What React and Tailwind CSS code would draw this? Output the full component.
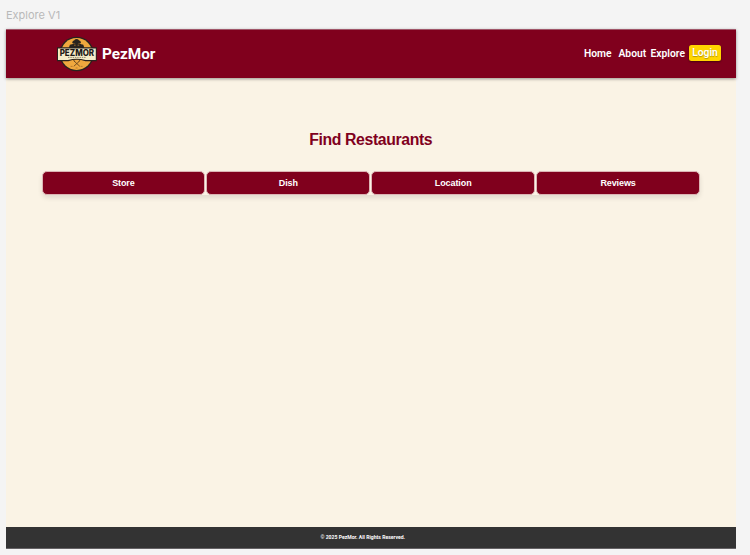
const filters = ["Store", "Dish", "Location", "Reviews"];

function Logo() {
  return (
    <svg width="40" height="36" viewBox="0 0 40 36" className="block shrink-0" aria-label="PezMor">
      <circle cx="19.6" cy="18" r="17.3" fill="#29231f" />
      <circle cx="19.6" cy="18" r="15.9" fill="#f0a83e" />
      <g fill="#29231f">
        <circle cx="19.6" cy="5.6" r="2.6" />
        <circle cx="17" cy="6.2" r="1.6" />
        <circle cx="22.2" cy="6.2" r="1.6" />
        <path d="M15.2 12V8h8.8v4z" />
        <circle cx="14.6" cy="10.6" r="2.3" />
        <circle cx="24.6" cy="10.6" r="2.3" />
        <path d="M11.5 13h16.2l-1-2H12.5z" />
      </g>
      <path d="M17 9.2h1.7M20.6 9.2h1.7" stroke="#b87f31" strokeWidth="0.8" />
      <path d="M0 11.3h39.8v13.9H28.4Q19.6 22.4 11.4 25.2H0z" fill="#29231f" />
      <path d="M1 12.5h37.8v11.6H28.6Q19.6 21.2 11 24.1H1z" fill="#f6ecc9" />
      <text x="19.9" y="20" textAnchor="middle" textLength="34.5" lengthAdjust="spacingAndGlyphs" fontSize="8.4" fontWeight="800" fill="#1e1a18" className="font-['Inter',sans-serif]">PEZMOR</text>
      <path d="M11 21.4h18" stroke="#665d4c" strokeWidth="0.7" strokeDasharray="1.5 0.8" />
      <path d="m16.8 24.8 6 5.5M22.8 24.8l-6 5.5M16.3 24.2l1.8 1.2M23.3 24.2l-1.8 1.2" stroke="#5a3c1d" strokeWidth="0.8" />
      <path d="M13.6 30.4h2M23.6 30.4h2M18.6 32h2" stroke="#7b4e20" strokeWidth="0.5" />
    </svg>
  );
}

export default function App() {
  return (
    <div className="h-[555px] w-[750px] overflow-hidden bg-[#f4f4f4] pl-[5.5px]">
      <div className="h-[29px] pt-[8px] pl-[0.5px] font-['Inter',sans-serif] text-[11px] leading-[14px] text-[#b9b9b9]">Explore V1</div>
      <main className="flex h-[520px] w-[730.5px] flex-col bg-[#faf3e5]">
        <header className="flex h-[49px] shrink-0 items-center border-t border-[#a05669] bg-[#80001d] pr-[15px] pl-[51.5px] font-['Roboto',sans-serif] text-white shadow-[0_1px_3px_rgba(0,0,0,0.4)]">
          <Logo />
          <span className="ml-[5px] text-[15.3px] leading-5 font-bold">PezMor</span>
          <nav className="ml-auto flex items-center text-[10.3px] leading-4 font-semibold">
            <a className="w-[34.5px]">Home</a>
            <a className="w-[32px]">About</a>
            <a className="w-[38.5px]">Explore</a>
            <button className="-mt-[2px] h-4 w-8 rounded-[2.5px] bg-[#ffd500] text-center leading-[14px] shadow-[0_1px_2px_rgba(0,0,0,0.45)] [text-shadow:0_1px_1px_rgba(0,0,0,0.3)]">Login</button>
          </nav>
        </header>
        <section className="flex-1 pt-[52px] pr-9 pl-9 font-['Liberation_Sans',sans-serif]">
          <h1 className="text-center text-[15.8px] leading-5 font-bold tracking-[-0.38px] text-[#80001d]">Find Restaurants</h1>
          <div className="mt-[21px] flex h-6 gap-px rounded-[5px] shadow-[0_3px_5px_rgba(0,0,0,0.1)]">
            {filters.map((name) => (
              <button key={name} className="flex-1 rounded-[5px] border border-[#dcb5b5] bg-[#80001d] text-[9px] leading-[22px] font-bold tracking-[-0.1px] text-white">{name}</button>
            ))}
          </div>
        </section>
        <footer className="flex h-[22px] items-center justify-center border-b border-[#656265] bg-[#333333] pr-4 font-['Roboto',sans-serif] text-[5.1px] font-bold text-white">© 2025 PezMor. All Rights Reserved.</footer>
      </main>
    </div>
  );
}
